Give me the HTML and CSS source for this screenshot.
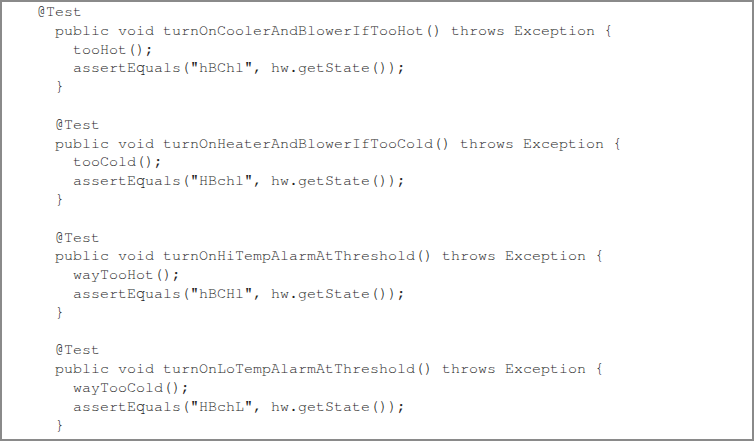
FILE: index.html
```html
<!DOCTYPE html>
<html>
<head>
<meta charset="utf-8">
<link rel="stylesheet" href="styles.css">
</head>
<body>
<div class="frame">
<pre class="code">@Test
  public void turnOnCoolerAndBlowerIfTooHot() throws Exception {
    tooHot();
    assertEquals("hBChl", hw.getState());
  }

  @Test
  public void turnOnHeaterAndBlowerIfTooCold() throws Exception {
    tooCold();
    assertEquals("HBchl", hw.getState());
  }

  @Test
  public void turnOnHiTempAlarmAtThreshold() throws Exception {
    wayTooHot();
    assertEquals("hBCHl", hw.getState());
  }

  @Test
  public void turnOnLoTempAlarmAtThreshold() throws Exception {
    wayTooCold();
    assertEquals("HBchL", hw.getState());
  }</pre>
</div>
</body>
</html>
```
FILE: styles.css
```css
html, body {
  margin: 0;
  padding: 0;
  background: #ffffff;
}
.frame {
  box-sizing: border-box;
  width: 754px;
  height: 441px;
  border: 2px solid #8a8a8a;
  background: #ffffff;
  overflow: hidden;
}
.code {
  margin: 0;
  padding: 1px 0 0 35px;
  font-family: "Nimbus Mono PS", "Nimbus Mono L", "FreeMono", "Courier 10 Pitch", "Liberation Mono", monospace;
  font-size: 15px;
  line-height: 18.8px;
  color: #1e1e1e;
}
```
